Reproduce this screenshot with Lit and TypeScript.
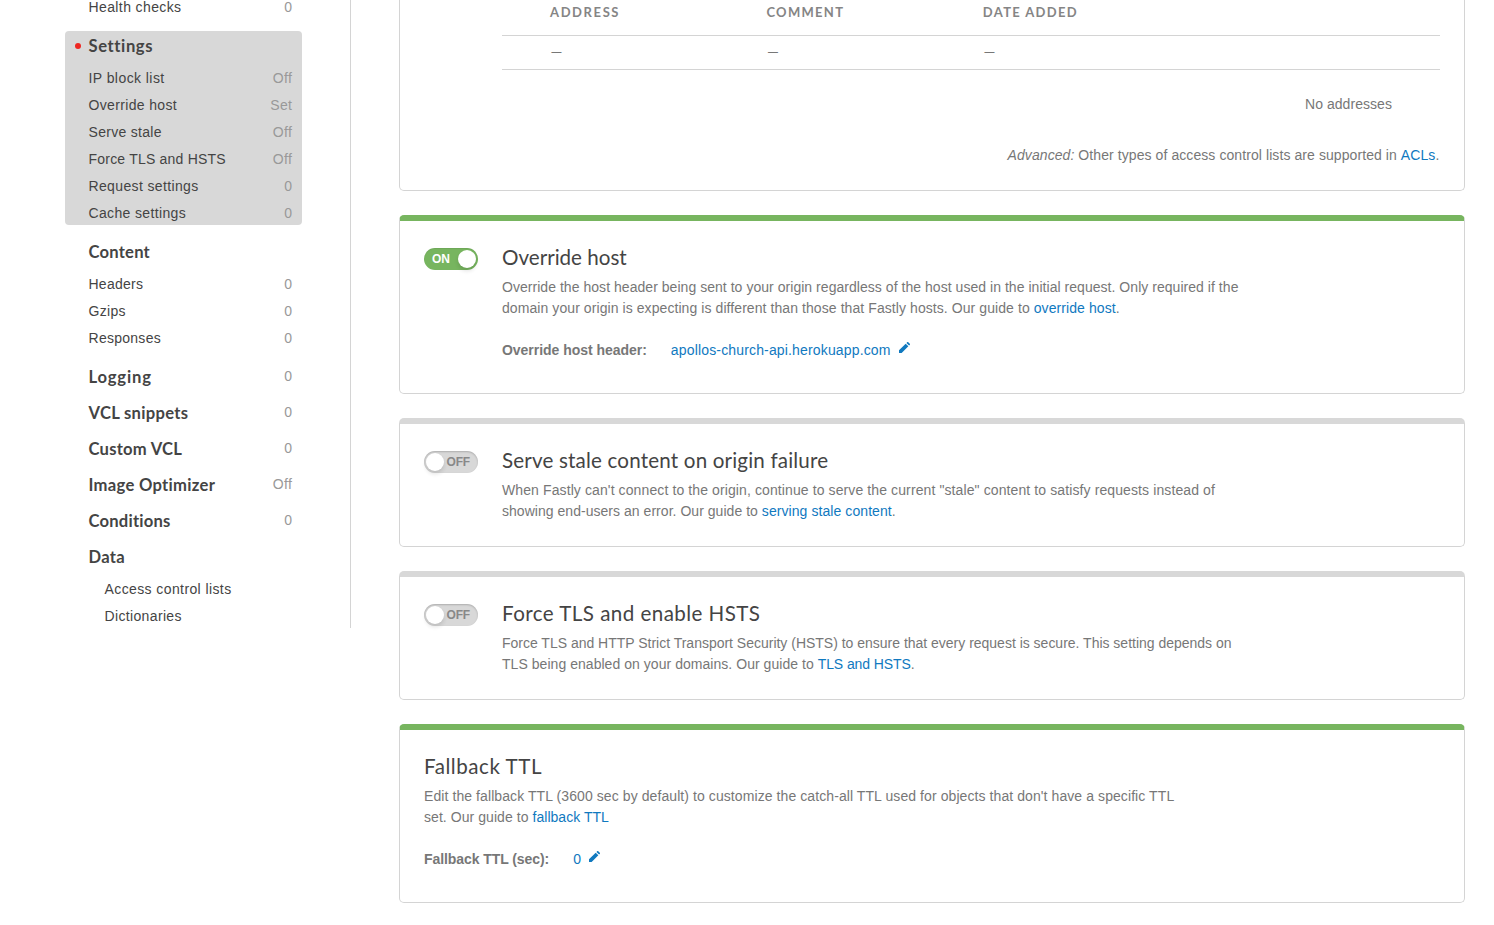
import { LitElement, html, css, nothing, svg } from "lit";
import { customElement, property } from "lit/decorators.js";
import { classMap } from "lit/directives/class-map.js";
import { styleMap } from "lit/directives/style-map.js";

/** A piece of text with its own letter spacing in pixels. */
interface Run {
  text: string;
  track: number;
  link?: boolean;
  italic?: boolean;
}

interface NavItem {
  label: string;
  track: number;
  value?: string;
}

interface NavGroup {
  title?: string;
  track?: number;
  value?: string;
  active?: boolean;
  indent?: boolean;
  items: NavItem[];
}

const run = ({ text, track, link, italic }: Run) => {
  const spacing = styleMap({ letterSpacing: `${track}px` });
  return link
    ? html`<a class="link" style=${spacing}>${text}</a>`
    : html`<span class=${classMap({ italic: !!italic })} style=${spacing}>${text}</span>`;
};

const NAV: NavGroup[] = [
  { items: [{ label: "Health checks", track: 0.39, value: "0" }] },
  {
    title: "Settings",
    track: 0.6,
    active: true,
    items: [
      { label: "IP block list", track: 0.43, value: "Off" },
      { label: "Override host", track: 0.35, value: "Set" },
      { label: "Serve stale", track: 0.3, value: "Off" },
      { label: "Force TLS and HSTS", track: 0.21, value: "Off" },
      { label: "Request settings", track: 0.36, value: "0" },
      { label: "Cache settings", track: 0.35, value: "0" },
    ],
  },
  {
    title: "Content",
    track: 0.22,
    items: [
      { label: "Headers", track: 0.25, value: "0" },
      { label: "Gzips", track: 0.3, value: "0" },
      { label: "Responses", track: 0.27, value: "0" },
    ],
  },
  { title: "Logging", track: 0.82, value: "0", items: [] },
  { title: "VCL snippets", track: 0.3, value: "0", items: [] },
  { title: "Custom VCL", track: 0.24, value: "0", items: [] },
  { title: "Image Optimizer", track: 0.3, value: "Off", items: [] },
  { title: "Conditions", track: 0.22, value: "0", items: [] },
  {
    title: "Data",
    track: 0.25,
    indent: true,
    items: [
      { label: "Access control lists", track: 0.4 },
      { label: "Dictionaries", track: 0.35 },
    ],
  },
];

@customElement("side-nav")
class SideNav extends LitElement {
  static styles = css`
    :host {
      display: block;
      box-sizing: border-box;
      width: 286px;
      height: 628px;
      border-right: 1px solid #d4d4d4;
      overflow: hidden;
      font: 14px/24px "Liberation Sans", Arial, sans-serif;
      color: #444;
    }
    .group {
      box-sizing: border-box;
      width: 237px;
      padding: 0 10px 0 23.5px;
      margin-bottom: 12px;
      border-radius: 4px;
    }
    .group.lead {
      margin-top: -5px;
    }
    .group.single {
      margin-bottom: 6px;
    }
    .group.active {
      background: #d8d8d8;
    }
    .row,
    .title {
      display: flex;
      justify-content: space-between;
      white-space: nowrap;
    }
    .row + .row {
      margin-top: 3px;
    }
    .title + .row {
      margin-top: 5px;
    }
    .title {
      position: relative;
      font: bold 16.6px/30px Lato, sans-serif;
    }
    .active .title::before {
      content: "";
      position: absolute;
      left: -13.5px;
      top: 12px;
      width: 6px;
      height: 6px;
      border-radius: 50%;
      background: #ee2722;
    }
    .indent .row {
      padding-left: 16px;
    }
    .value {
      margin-right: -0.4px;
      letter-spacing: 0.4px;
      color: #999;
    }
    .title .value {
      font: 14px/28px "Liberation Sans", Arial, sans-serif;
    }
  `;

  render() {
    return NAV.map((g) => {
      const classes = classMap({
        group: true,
        lead: !g.title,
        single: !!g.title && !g.items.length,
        active: !!g.active,
        indent: !!g.indent,
      });
      return html`<div class=${classes}>
        ${g.title
          ? html`<div class="title">
              ${run({ text: g.title, track: g.track ?? 0 })}
              ${g.value ? html`<span class="value">${g.value}</span>` : nothing}
            </div>`
          : nothing}
        ${g.items.map(
          (i) => html`<div class="row">
            ${run({ text: i.label, track: i.track })}
            ${i.value ? html`<span class="value">${i.value}</span>` : nothing}
          </div>`
        )}
      </div>`;
    });
  }
}

@customElement("toggle-switch")
class ToggleSwitch extends LitElement {
  @property({ type: Boolean }) on = false;

  static styles = css`
    :host {
      display: block;
      flex: none;
    }
    .track {
      box-sizing: border-box;
      display: flex;
      align-items: center;
      justify-content: space-between;
      width: 54px;
      height: 22px;
      padding: 0 8px 0 2px;
      border-radius: 11px;
      background: #d8d8d8;
      box-shadow: inset 0 1px 2px rgba(0, 0, 0, 0.2);
      color: #888;
      font: bold 12px/22px "Liberation Sans", Arial, sans-serif;
    }
    .track.on {
      flex-direction: row-reverse;
      padding: 0 2px 0 8px;
      background: #77b55f;
      box-shadow: inset 0 1px 1px rgba(0, 0, 0, 0.08);
      color: #fff;
    }
    .knob {
      width: 18px;
      height: 18px;
      border-radius: 50%;
      background: #fff;
      box-shadow: 0 3px 4px rgba(0, 0, 0, 0.12);
    }
    .label {
      letter-spacing: -0.15px;
    }
  `;

  render() {
    return html`<div class=${classMap({ track: true, on: this.on })}>
      <span class="knob"></span>
      <span class="label">${this.on ? "ON" : "OFF"}</span>
    </div>`;
  }
}

interface Panel {
  title: Run;
  toggle?: boolean;
  enabled: boolean;
  lines: Run[][];
  field?: { label: Run; value: Run };
}

const PANELS: Panel[] = [
  {
    title: { text: "Override host", track: 0 },
    toggle: true,
    enabled: true,
    lines: [
      [
        {
          text: "Override the host header being sent to your origin regardless of the host used in the initial request. Only required if the",
          track: 0.04,
        },
      ],
      [
        {
          text: "domain your origin is expecting is different than those that Fastly hosts. Our guide to ",
          track: 0.076,
        },
        { text: "override host", track: 0.08, link: true },
        { text: ".", track: 0 },
      ],
    ],
    field: {
      label: { text: "Override host header:", track: -0.03 },
      value: { text: "apollos-church-api.herokuapp.com", track: 0.155 },
    },
  },
  {
    title: { text: "Serve stale content on origin failure", track: 0.17 },
    toggle: true,
    enabled: false,
    lines: [
      [
        {
          text: 'When Fastly can\'t connect to the origin, continue to serve the current "stale" content to satisfy requests instead of',
          track: 0.106,
        },
      ],
      [
        { text: "showing end-users an error. Our guide to ", track: 0.035 },
        { text: "serving stale content", track: 0.076, link: true },
        { text: ".", track: 0 },
      ],
    ],
  },
  {
    title: { text: "Force TLS and enable HSTS", track: 0.43 },
    toggle: true,
    enabled: false,
    lines: [
      [
        {
          text: "Force TLS and HTTP Strict Transport Security (HSTS) to ensure that every request is secure. This setting depends on",
          track: -0.01,
        },
      ],
      [
        { text: "TLS being enabled on your domains. Our guide to ", track: 0.043 },
        { text: "TLS and HSTS", track: -0.1, link: true },
        { text: ".", track: 0 },
      ],
    ],
  },
  {
    title: { text: "Fallback TTL", track: 0.52 },
    enabled: true,
    lines: [
      [
        {
          text: "Edit the fallback TTL (3600 sec by default) to customize the catch-all TTL used for objects that don't have a specific TTL",
          track: 0.083,
        },
      ],
      [
        { text: "set. Our guide to ", track: 0.062 },
        { text: "fallback TTL", track: 0.03, link: true },
      ],
    ],
    field: {
      label: { text: "Fallback TTL (sec):", track: -0.075 },
      value: { text: "0", track: 0 },
    },
  },
];

const COLUMNS: Run[] = [
  { text: "ADDRESS", track: 1.6 },
  { text: "COMMENT", track: 1.3 },
  { text: "DATE ADDED", track: 1.33 },
];

const pencil = svg`<path d="M0 9.1 7.3 1.8 10.2 4.7 2.9 12H0ZM8.1 1 8.9.2Q9.5-.3 10.1.2L11.8 1.9Q12.3 2.5 11.8 3.1L11 3.9Z"/>`;

@customElement("app-root")
class AppRoot extends LitElement {
  static styles = css`
    :host {
      display: block;
      height: 925px;
      overflow: hidden;
      background: #fff;
      font: 14px/21px "Liberation Sans", Arial, sans-serif;
      color: #777;
    }
    .page {
      display: flex;
      gap: 48px;
      padding: 0 29px 0 65px;
    }
    side-nav {
      flex: none;
    }
    .panels {
      display: flex;
      flex: 1;
      flex-direction: column;
      gap: 24px;
    }
    .card {
      box-sizing: border-box;
      display: flex;
      gap: 24px;
      padding: 24px;
      border: 1px solid #d4d4d4;
      border-top: 6px solid #d8d8d8;
      border-radius: 5px;
      white-space: nowrap;
    }
    .card.enabled {
      border-top-color: #77b55f;
    }
    .card.blocks {
      flex-direction: column;
      gap: 0;
      height: 191px;
      padding: 0 24px 0 102px;
      border-top: 0;
      border-radius: 0 0 5px 5px;
    }
    toggle-switch {
      margin-top: 3px;
    }
    .title {
      margin: 0 0 8px;
      font: 400 20.6px/24px Lato, sans-serif;
      color: #444;
    }
    .copy {
      margin: 0;
    }
    .line {
      display: block;
      white-space: pre;
    }
    .link {
      color: #1079bf;
    }
    .italic {
      font-style: italic;
    }
    .field {
      display: flex;
      margin: 21px 0 8px;
    }
    .name {
      font-weight: bold;
      margin-right: 24px;
    }
    .pencil {
      width: 11px;
      height: 11px;
      margin: 2px 0 0 8px;
      fill: #1079bf;
    }
    .grid {
      display: grid;
      grid-template-columns: repeat(3, 216.4px);
      padding-left: 48px;
      border-bottom: 1px solid #d4d4d4;
      font-family: Lato, sans-serif;
    }
    .head {
      font-size: 13px;
      font-weight: bold;
      line-height: 24px;
      padding-bottom: 11px;
      color: #858585;
    }
    .body {
      padding-left: 48.6px;
      padding-bottom: 2px;
      font-size: 15px;
      line-height: 31px;
    }
    .empty {
      padding: 24px 48px 0 0;
      text-align: right;
    }
    .note {
      padding: 30px 0.7px 0 0;
      text-align: right;
    }
  `;

  private panel(p: Panel) {
    return html`<section class=${classMap({ card: true, enabled: p.enabled })}>
      ${p.toggle ? html`<toggle-switch ?on=${p.enabled}></toggle-switch>` : nothing}
      <div>
        <h2 class="title">${run(p.title)}</h2>
        <p class="copy">${p.lines.map((l) => html`<span class="line">${l.map(run)}</span>`)}</p>
        ${p.field
          ? html`<div class="field">
              <span class="name">${run(p.field.label)}</span>
              ${run({ ...p.field.value, link: true })}
              <svg class="pencil" viewBox="0 0 12 12">${pencil}</svg>
            </div>`
          : nothing}
      </div>
    </section>`;
  }

  render() {
    return html`<div class="page">
      <side-nav></side-nav>
      <main class="panels">
        <section class="card blocks">
          <div class="grid head">${COLUMNS.map(run)}</div>
          <div class="grid body">${COLUMNS.map(() => html`<span>—</span>`)}</div>
          <div class="empty">${run({ text: "No addresses", track: 0.05 })}</div>
          <div class="note">
            ${run({ text: "Advanced:", track: 0.09, italic: true })}
            ${run({ text: "Other types of access control lists are supported in", track: 0.08 })}
            ${run({ text: "ACLs", track: 0.1, link: true })}${run({ text: ".", track: 0 })}
          </div>
        </section>
        ${PANELS.map((p) => this.panel(p))}
      </main>
    </div>`;
  }
}
